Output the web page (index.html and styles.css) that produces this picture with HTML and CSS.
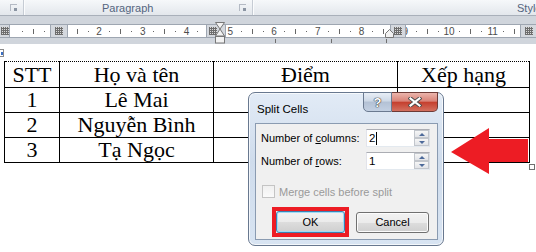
FILE: index.html
```html
<!DOCTYPE html>
<html lang="vi">
<head>
    <meta charset="UTF-8">
    <title>Split Cells</title>
    <link rel="stylesheet" href="styles.css">
</head>
<body>
    <div class="ribbon">
        <div class="rgroup g1"><span class="launch"></span></div>
        <div class="rsep"></div>
        <div class="rgroup g2"><span class="glabel">Paragraph</span><span class="launch"></span></div>
        <div class="rsep"></div>
        <div class="rgroup g3"><span class="glabel">Styles</span></div>
    </div>
    <div class="band"></div>
    <div class="ruler">
        <div class="scale">
            <b></b><i class="d"></i><i class="t"></i><i class="d"></i>
            <b>1</b><i class="d"></i><i class="t"></i><i class="d"></i>
            <b>2</b><i class="d"></i><i class="t"></i><i class="d"></i>
            <b>3</b><i class="d"></i><i class="t"></i><i class="d"></i>
            <b>4</b><i class="d"></i><i class="t"></i><i class="d"></i>
            <b>5</b><i class="d"></i><i class="t"></i><i class="d"></i>
            <b>6</b><i class="d"></i><i class="t"></i><i class="d"></i>
            <b>7</b><i class="d"></i><i class="t"></i><i class="d"></i>
            <b>8</b><i class="d"></i><i class="t"></i><i class="d"></i>
            <b>9</b><i class="d"></i><i class="t"></i><i class="d"></i>
            <b>10</b><i class="d"></i><i class="t"></i><i class="d"></i>
            <b>11</b><i class="d"></i><i class="t"></i><i class="d"></i>
        </div>
        <span class="colmark cm1"><span class="gridico"></span></span>
        <span class="colmark cm2"><span class="gridico"></span></span>
        <span class="colmark cm3"><span class="gridico"></span></span>
        <span class="colmark cm4"><span class="gridico"></span></span>
        <span class="colmark cm5"><span class="gridico"></span></span>
    </div>
    <div class="ruler-foot"><i class="f1"></i><i class="f2"></i><i class="f3"></i></div>

    <!-- indent markers sit over the ruler -->
    <svg class="indent" width="11" height="22" viewBox="0 0 11 22">
        <path d="M0.5 0.5H9.5L5 7Z M5 7L9.5 14H0.5Z" fill="#f2f2f2" stroke="#777"/>
        <rect x="0.5" y="14.5" width="9" height="6.5" fill="#f2f2f2" stroke="#777"/>
    </svg>
    <svg class="rindent" width="9" height="9" viewBox="0 0 9 9">
        <path d="M0.5 8.5V4.5L4.5 0.5L8.5 4.5V8.5Z" fill="#f2f2f2" stroke="#777"/>
    </svg>

    <div class="doc">
        <table class="grid">
            <colgroup>
                <col style="width:55px"><col style="width:154px"><col style="width:184px"><col style="width:132px">
            </colgroup>
            <tr><td>STT</td><td>Họ và tên</td><td>Điểm</td><td>Xếp hạng</td></tr>
            <tr><td>1</td><td>Lê Mai</td><td></td><td></td></tr>
            <tr><td>2</td><td>Nguyễn Bình</td><td></td><td></td></tr>
            <tr><td>3</td><td>Tạ Ngọc</td><td></td><td></td></tr>
        </table>
    </div>

    <span class="move-handle"></span>
    <span class="resize-handle"></span>

    <svg class="arrow" width="80" height="48" viewBox="0 0 80 48">
        <polygon points="1,25 39,1 39,12 78,12 78,35 39,35 39,47" fill="#ed1c24"/>
    </svg>

    <div class="dlg">
        <div class="dlg-title">
            <span class="dlg-caption">Split Cells</span>
            <div class="caption-btns">
                <span class="qbtn">?</span>
                <span class="xbtn">
                    <svg width="14" height="10" viewBox="0 0 14 10">
                        <path d="M2.5 1.5L11.5 8.5M11.5 1.5L2.5 8.5" stroke="#4b4b4b" stroke-width="4" stroke-linecap="square"/>
                        <path d="M2.5 1.5L11.5 8.5M11.5 1.5L2.5 8.5" stroke="#fff" stroke-width="2.2" stroke-linecap="square"/>
                    </svg>
                </span>
            </div>
        </div>
        <div class="dlg-client">
            <div class="frow">
                <label>Number of <u>c</u>olumns:</label>
                <div class="spin-field">
                    <span class="val">2<span class="caret"></span></span>
                    <span class="spin"><span class="up"></span><span class="dn"></span></span>
                </div>
            </div>
            <div class="frow">
                <label>Number of <u>r</u>ows:</label>
                <div class="spin-field">
                    <span class="val">1</span>
                    <span class="spin"><span class="up"></span><span class="dn"></span></span>
                </div>
            </div>
            <div class="check-row">
                <span class="checkbox"></span>
                <span class="check-label">Merge cells before split</span>
            </div>
            <div class="btn-row">
                <div class="okframe"><span class="btn btn-ok">OK</span></div>
                <span class="btn btn-cancel">Cancel</span>
            </div>
        </div>
    </div>
</body>
</html>
```

FILE: styles.css
```css
* { box-sizing: border-box; }
body {
    margin: 0;
    width: 536px;
    height: 252px;
    overflow: hidden;
    position: relative;
    background: #fff;
    font-family: "Liberation Sans", Arial, sans-serif;
}

/* ribbon strip */
.ribbon {
    height: 16px;
    display: flex;
    background: linear-gradient(#f6f8fa, #e3e7ec);
    border-bottom: 1px solid #a9b0ba;
    font-size: 11px;
    color: #54657f;
    white-space: nowrap;
    overflow: hidden;
}
.rgroup { display: flex; align-items: center; height: 15px; flex: none; }
.g1 { width: 23px; justify-content: flex-end; padding-right: 6px; }
.g2 { width: 228px; }
.g2 .glabel { margin-left: 78px; }
.g2 .launch { margin-left: auto; margin-right: 6px; }
.g3 .glabel { margin-left: 264px; }
.rsep { width: 1px; height: 15px; background: #c6ccd4; box-shadow: 1px 0 0 #fbfcfd; flex: none; }
.launch {
    width: 7px;
    height: 7px;
    border: 1px solid #b4bac4;
    border-width: 1px 0 0 1px;
    position: relative;
}
.launch::after {
    content: "";
    position: absolute;
    right: 0;
    bottom: 0;
    width: 3px;
    height: 3px;
    background: #8b95a3;
}

.band { height: 8px; background: #d0d5dc; }

/* ruler */
.ruler {
    height: 14px;
    position: relative;
    background: #fff;
    border-top: 1px solid #9ea6b1;
    border-bottom: 1px solid #9ea6b1;
    overflow: hidden;
}
.scale { display: flex; margin-left: 6px; height: 12px; }
.scale > * {
    flex: none;
    width: 10.95px;
    display: flex;
    align-items: center;
    justify-content: center;
}
.scale b { font-weight: normal; font-size: 10px; color: #4c4c4c; }
.scale .d::before { content: ""; width: 1px; height: 1px; background: #666; }
.scale .t::before { content: ""; width: 1px; height: 5px; background: #666; }
.colmark {
    position: absolute;
    top: 0;
    height: 12px;
    background: #d4d8de;
    border-left: 1px solid #9ea6b1;
    border-right: 1px solid #9ea6b1;
    display: flex;
    align-items: center;
    justify-content: center;
}
.cm1 { left: -1px; width: 11px; }
.cm2 { left: 50px; width: 18px; }
.cm3 { left: 206px; width: 20px; justify-content: flex-start; padding-left: 2px; }
.cm4 { left: 390px; width: 16px; }
.cm5 { left: 520px; width: 20px; justify-content: flex-start; padding-left: 4px; }
.gridico {
    width: 8px;
    height: 8px;
    background:
        repeating-linear-gradient(90deg, #6d6d6d 0 1px, transparent 1px 2px),
        repeating-linear-gradient(0deg, #6d6d6d 0 1px, #d9d9d9 1px 2px);
}
.ruler-foot { height: 6px; background: #d0d5dc; display: flex; }
.ruler-foot i { width: 1px; height: 4px; margin-top: 1px; background: #6f6f6f; flex: none; }
.f1 { margin-left: 275px; }
.f2 { margin-left: 55px; }
.f3 { margin-left: 54px; }
.indent { position: absolute; left: 215px; top: 22px; }
.rindent { position: absolute; left: 385px; top: 29px; }

/* document table */
.grid {
    margin: 17px 0 0 4px;
    border-collapse: collapse;
    table-layout: fixed;
    width: 525px;
    font-family: "Liberation Serif", "Times New Roman", serif;
    font-size: 22px;
    color: #000;
}
.grid td {
    border: 1px solid #000;
    padding: 0;
    height: 25px;
    line-height: 24px;
    text-align: center;
    white-space: nowrap;
}
.grid tr:first-child td { border-top: 1px dotted #000; height: 26px; }
.move-handle {
    position: absolute;
    left: -4px;
    top: 49px;
    width: 8px;
    height: 8px;
    border: 1px solid #8a8a8a;
    background: #fff;
}
.move-handle::after {
    content: "";
    position: absolute;
    left: 4px;
    top: 2px;
    width: 2px;
    height: 3px;
    background: #3b6fc4;
}
.resize-handle {
    position: absolute;
    left: 529px;
    top: 164px;
    width: 6px;
    height: 6px;
    border: 1px solid #707070;
    background: #fff;
}
.arrow { position: absolute; left: 450px; top: 127px; }

/* Split Cells dialog */
.dlg {
    position: absolute;
    left: 248px;
    top: 92px;
    width: 196px;
    height: 154px;
    border: 1px solid #68788f;
    border-radius: 7px;
    background: linear-gradient(#e2ebf6 0%, #cfdcec 45%, #d8e4f2 100%);
    box-shadow: inset 0 0 0 1px rgba(255,255,255,0.7);
    padding: 0 5px 5px 6px;
    display: flex;
    flex-direction: column;
    font-size: 11px;
    color: #000;
}
.dlg-title { height: 30px; display: flex; align-items: flex-start; flex: none; }
.dlg-caption { margin: 10px 0 0 2px; font-size: 11.5px; }
.caption-btns { margin: -1px 0 0 auto; display: flex; }
.qbtn, .xbtn {
    height: 20px;
    display: flex;
    align-items: center;
    justify-content: center;
}
.qbtn {
    width: 29px;
    border: 1px solid #6b7a90;
    border-radius: 0 0 0 5px;
    background: linear-gradient(#e8eef6, #cdd8e6 45%, #b3c1d5 50%, #c3d0e2);
    color: #fff;
    font-weight: bold;
    font-size: 13px;
    text-shadow: 0 0 1px #333, 0 0 1px #333, 0 0 1px #333;
}
.xbtn {
    width: 46px;
    border: 1px solid #6d3b37;
    border-left: none;
    border-radius: 0 0 5px 0;
    background: linear-gradient(#ebb5ac, #d98378 45%, #c5402f 52%, #d3705f);
}
.dlg-client {
    flex: 1;
    border: 1px solid #8a9bb1;
    background: #f0f0f0;
    padding: 5px 0 0 5px;
}
.frow { display: flex; align-items: center; height: 18px; }
.frow + .frow { margin-top: 5px; }
.frow label { width: 105px; }
.spin-field {
    width: 64px;
    height: 18px;
    border: 1px solid #abadb3;
    border-color: #abadb3 #dbdfe6 #e3e9ef #e2e3ea;
    background: #fff;
    display: flex;
    padding: 0 0 0 2px;
}
.val { flex: 1; display: flex; align-items: center; font-size: 11.5px; }
.caret { width: 1px; height: 13px; background: #000; margin-left: 1px; }
.spin { width: 15px; display: flex; flex-direction: column; }
.spin span {
    flex: 1;
    border: 1px solid #c2c6cc;
    background: linear-gradient(#f6f6f6, #e2e4e8);
    display: flex;
    align-items: center;
    justify-content: center;
}
.spin span::before {
    content: "";
    border-left: 3px solid transparent;
    border-right: 3px solid transparent;
}
.spin .up::before { border-bottom: 3px solid #4d6a9a; }
.spin .dn::before { border-top: 3px solid #4d6a9a; }
.check-row { display: flex; align-items: center; margin-top: 15px; padding-left: 1px; height: 13px; }
.checkbox {
    width: 13px;
    height: 13px;
    border: 1px solid #c4c4c4;
    background: linear-gradient(#f0f0f0, #fafafa);
}
.check-label { margin-left: 4px; color: #9a9a9a; }
.btn-row { display: flex; align-items: center; margin-top: 9px; padding-left: 11px; }
.okframe { width: 77px; height: 30px; border: 4px solid #ed1c24; }
.btn {
    height: 21px;
    border: 1px solid #707070;
    border-radius: 3px;
    background: linear-gradient(#f2f2f2 0%, #ebebeb 50%, #dddddd 51%, #cfcfcf 100%);
    box-shadow: inset 0 0 0 1px #fcfcfc;
    display: flex;
    align-items: center;
    justify-content: center;
}
.btn-ok {
    height: 22px;
    border-color: #3c7fb1;
    box-shadow: inset 0 0 0 1px #9fdcf6;
}
.btn-cancel { width: 73px; margin-left: 7px; }
```
